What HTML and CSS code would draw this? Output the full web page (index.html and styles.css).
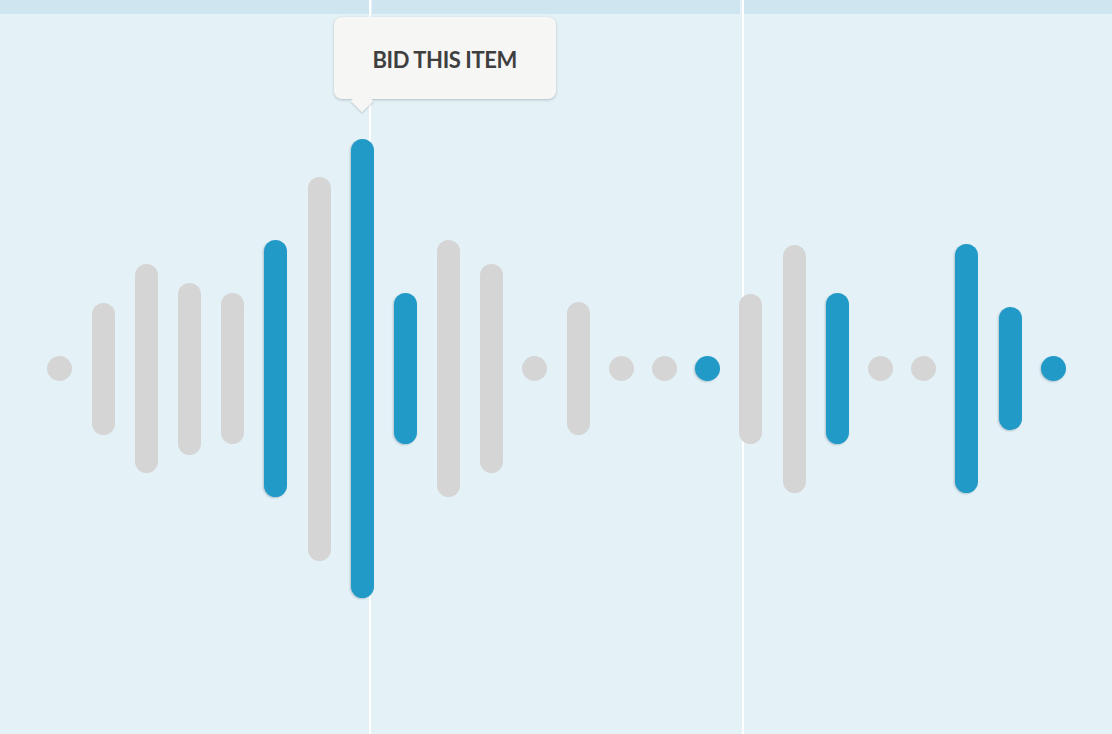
FILE: index.html
```html
<!DOCTYPE html>
<html lang="en">
<head>
<meta charset="utf-8">
<title>Bid waveform</title>
<link rel="stylesheet" href="styles.css">
</head>
<body>
<main class="stage">
  <div class="columns">
    <section class="col col-a"><div class="band"></div></section>
    <div class="divider"></div>
    <section class="col col-b"><div class="band"></div></section>
    <div class="divider"></div>
    <section class="col col-c"><div class="band"></div></section>
  </div>

  <div class="wave">
    <span class="bar dot"></span>
    <span class="bar" style="--h:132px"></span>
    <span class="bar" style="--h:209px"></span>
    <span class="bar" style="--h:172px"></span>
    <span class="bar" style="--h:151px"></span>
    <span class="bar blue" style="--h:257px"></span>
    <span class="bar" style="--h:384px"></span>
    <span class="bar blue active" style="--h:459px">
      <span class="tooltip"><span class="tooltip-text">BID THIS ITEM</span></span>
    </span>
    <span class="bar blue" style="--h:151px"></span>
    <span class="bar" style="--h:257px"></span>
    <span class="bar" style="--h:209px"></span>
    <span class="bar dot"></span>
    <span class="bar" style="--h:133px"></span>
    <span class="bar dot"></span>
    <span class="bar dot"></span>
    <span class="bar dot blue"></span>
    <span class="bar" style="--h:150px"></span>
    <span class="bar" style="--h:248px"></span>
    <span class="bar blue" style="--h:151px"></span>
    <span class="bar dot"></span>
    <span class="bar dot"></span>
    <span class="bar blue" style="--h:249px"></span>
    <span class="bar blue" style="--h:123px"></span>
    <span class="bar dot blue"></span>
  </div>
</main>
</body>
</html>
```
FILE: styles.css
```css
* { box-sizing: border-box; }

html, body {
  margin: 0;
  padding: 0;
}

body {
  background: #e4f2f8;
  font-family: "Lato", "Open Sans", "Liberation Sans", sans-serif;
  overflow: hidden;
}

.stage {
  display: grid;
  width: 1112px;
  height: 734px;
}

.columns,
.wave {
  grid-area: 1 / 1;
}

.columns {
  display: grid;
  grid-template-columns: 369px 2px 371px 2px 1fr;
  height: 734px;
}

.col {
  background: #e4f2f8;
}

.band {
  height: 14px;
  background: #cfe6f0;
}

.col-a .band { margin-right: -1px; }
.col-b .band { margin-left: 1px; margin-right: 2px; }
.col-c .band { margin-left: 0; }

.divider {
  background: #ffffff;
}

.wave {
  display: flex;
  align-items: center;
  gap: 20.2px;
  height: 734px;
  padding: 3px 0 0 48.4px;
}

.bar {
  position: relative;
  flex: 0 0 23px;
  width: 23px;
  height: var(--h);
  border-radius: 12px;
  background: #d5d5d5;
}

.bar.blue {
  background: #219ac8;
  box-shadow: -1px 1px 2px rgba(20, 60, 80, 0.25);
}

.bar.dot {
  flex: 0 0 25px;
  width: 25px;
  height: 25px;
  margin: 0 -1px;
  border-radius: 50%;
}

.tooltip {
  position: absolute;
  left: -17px;
  top: -122px;
  width: 222px;
  height: 82px;
  display: flex;
  align-items: center;
  justify-content: center;
  background: #f6f6f4;
  border-radius: 8px;
  box-shadow: 0 1px 3px rgba(0, 0, 0, 0.22);
}

.tooltip::after {
  content: "";
  position: absolute;
  left: 20px;
  bottom: -10px;
  width: 16px;
  height: 16px;
  background: #f6f6f4;
  transform: rotate(45deg);
  box-shadow: 1px 1px 2px rgba(0, 0, 0, 0.15);
}

.tooltip-text {
  position: relative;
  z-index: 1;
  font-size: 22px;
  font-weight: 700;
  color: #3f3f3f;
  letter-spacing: -0.4px;
  margin-top: 2px;
}
```
